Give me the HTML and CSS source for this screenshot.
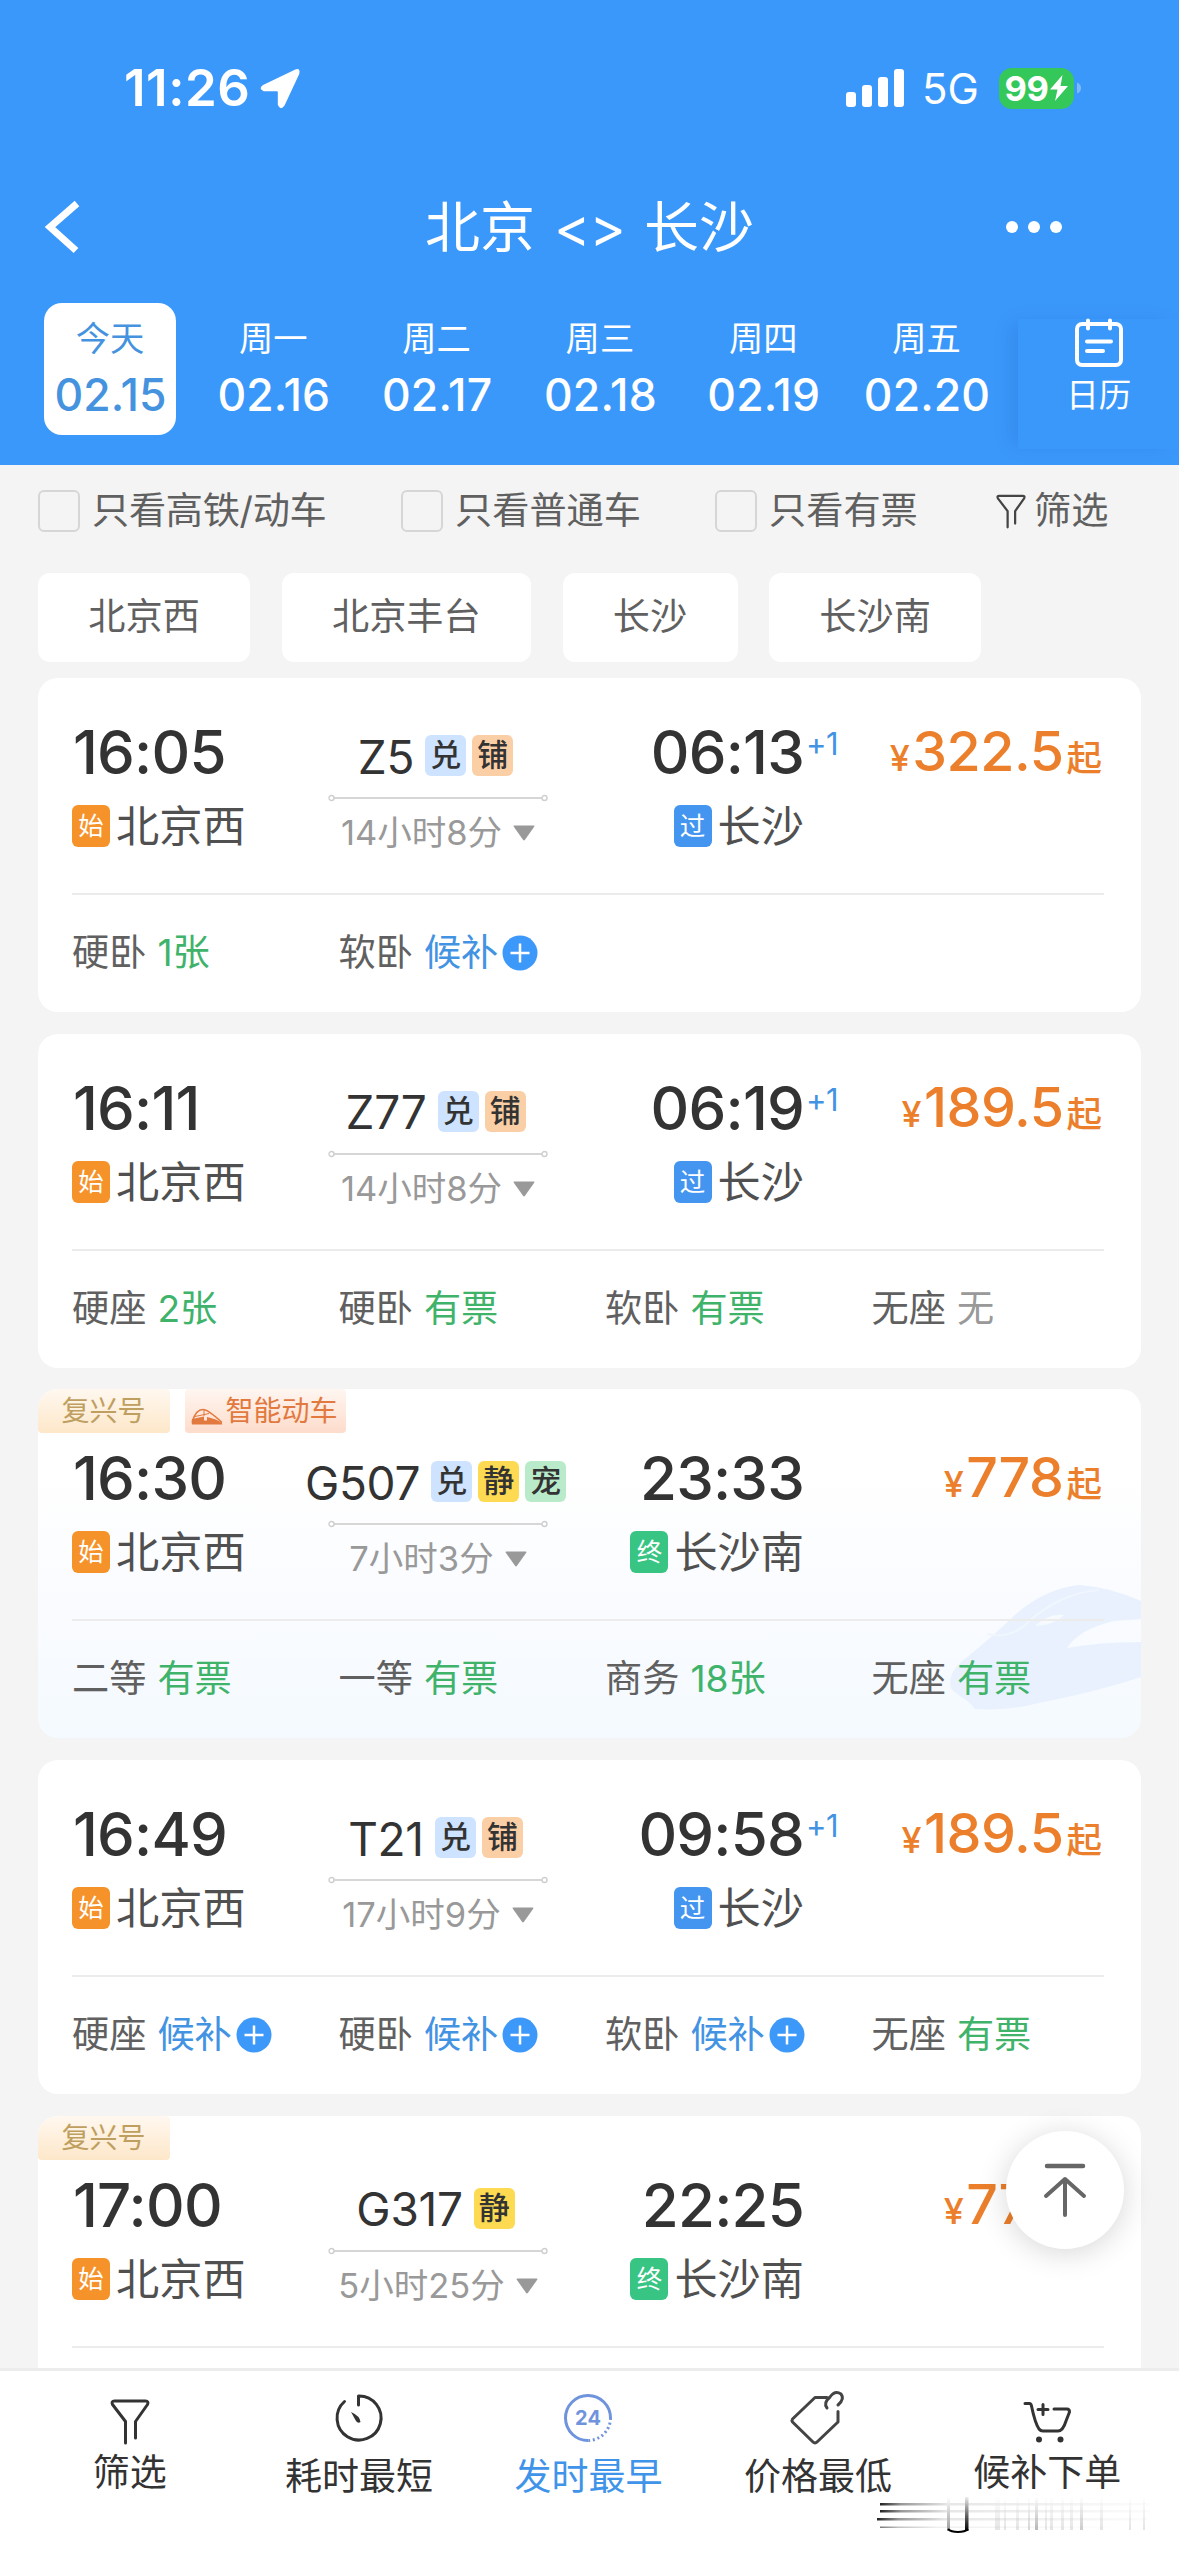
FILE: index.html
```html
<!DOCTYPE html>
<html lang="zh-CN">
<head>
<meta charset="utf-8">
<title>北京 - 长沙 车票查询</title>
<link rel="stylesheet" href="styles.css">
</head>
<body>
<svg class="defs" aria-hidden="true">
  <symbol id="i-funnel" viewBox="0 0 40 46"><path d="M15.500 44V22.500L2.500 5.500Q1 2 4.500 2H35.500Q39 2 37.500 5.500L25.500 22.500V39" fill="none" stroke="currentColor" stroke-width="3" stroke-linecap="round" stroke-linejoin="round"/></symbol>
  <symbol id="i-plus" viewBox="0 0 36 36"><circle cx="18" cy="18" r="17.500" fill="#3c98f9"/><path d="M18 8.500v19M8.500 18h19" stroke="#fff" stroke-width="2.500"/></symbol>
  <symbol id="i-line" viewBox="0 0 220 8"><path d="M6 4H214" stroke="#d6d6d6" stroke-width="2"/><circle cx="3.500" cy="4" r="2.500" fill="#fff" stroke="#cfcfcf" stroke-width="1.400"/><circle cx="216.500" cy="4" r="2.500" fill="#fff" stroke="#cfcfcf" stroke-width="1.400"/></symbol>
  <symbol id="i-down" viewBox="0 0 22 16"><path d="M1.500 .5h19q1.500 0 .7 1.200L12 14.800q-1 1.200-2 0L.8 1.700Q0 .5 1.500 .5Z" fill="#999"/></symbol>
</svg>

<header class="header">
  <div class="status">
    <span class="clock">11:26</span>
    <svg class="loc" viewBox="0 0 40 40"><path d="M35 1.500 2.500 17Q-2 20 3 22H16.500Q18 22 18 23.500V36.500Q20 42 23.500 37L38.500 5Q40-1 35 1.500Z" fill="#fff" stroke="#fff" stroke-width="1.500"/></svg>
    <svg class="signal" viewBox="0 0 60 38"><g fill="#fff"><rect x="0" y="23" width="10" height="15" rx="3"/><rect x="16" y="16" width="10" height="22" rx="3"/><rect x="32" y="8" width="10" height="30" rx="3"/><rect x="48" y="0" width="10" height="38" rx="3"/></g></svg>
    <span class="net">5G</span>
    <span class="battery">99<svg viewBox="0 0 18 26"><path d="M12.500 0 0 14.500h7.500L5 26 18 11h-7.500Z" fill="#fff"/></svg></span>
    <svg class="nub" viewBox="0 0 5 14"><path d="M0 0Q5 2 5 7T0 14Z" fill="#7dbcfb"/></svg>
  </div>
  <div class="nav">
    <svg class="back" viewBox="0 0 36 52"><path d="M33 2.500 6 26 32 49.500" fill="none" stroke="#fff" stroke-width="7"/></svg>
    <h1>北京 <span class="swap">&lt;&gt;</span> 长沙</h1>
    <svg class="more" viewBox="0 0 58 14"><g fill="#fff"><circle cx="6" cy="7" r="6"/><circle cx="28" cy="7" r="6"/><circle cx="50" cy="7" r="6"/></g></svg>
  </div>
  <div class="dates">
    <div class="day on"><span>今天</span><b>02.15</b></div>
    <div class="day"><span>周一</span><b>02.16</b></div>
    <div class="day"><span>周二</span><b>02.17</b></div>
    <div class="day"><span>周三</span><b>02.18</b></div>
    <div class="day"><span>周四</span><b>02.19</b></div>
    <div class="day"><span>周五</span><b>02.20</b></div>
    <div class="cal">
      <svg viewBox="0 0 50 50"><g fill="none" stroke="#fff" stroke-width="4" stroke-linecap="round"><rect x="3" y="6" width="44" height="41" rx="5"/><path d="M14 2.500v8M36 2.500v8M13 23.500h24M13 33h16"/></g></svg>
      <span>日历</span>
    </div>
  </div>
</header>

<section class="filters">
  <label class="check c1"><i></i>只看高铁/动车</label>
  <label class="check c2"><i></i>只看普通车</label>
  <label class="check c3"><i></i>只看有票</label>
  <span class="sift"><svg><use href="#i-funnel"/></svg>筛选</span>
</section>

<section class="chips"><span>北京西</span><span>北京丰台</span><span>长沙</span><span>长沙南</span></section>

<main class="list">
  <article class="card">
    <div class="trip">
      <div class="from"><div class="time">16:05</div><div class="stn"><i class="mk start">始</i>北京西</div></div>
      <div class="mid"><div class="no">Z5<i class="tg dui">兑</i><i class="tg pu">铺</i></div><svg class="line"><use href="#i-line"/></svg><div class="dur">14小时8分<svg><use href="#i-down"/></svg></div></div>
      <div class="to"><div class="time">06:13<sup>+1</sup></div><div class="stn"><i class="mk pass">过</i>长沙</div></div>
      <div class="price"><small>¥</small>322.5<em>起</em></div>
    </div>
    <div class="seats"><span>硬卧<b>1张</b></span><span>软卧<b class="wait">候补<svg><use href="#i-plus"/></svg></b></span></div>
  </article>

  <article class="card">
    <div class="trip">
      <div class="from"><div class="time">16:11</div><div class="stn"><i class="mk start">始</i>北京西</div></div>
      <div class="mid"><div class="no">Z77<i class="tg dui">兑</i><i class="tg pu">铺</i></div><svg class="line"><use href="#i-line"/></svg><div class="dur">14小时8分<svg><use href="#i-down"/></svg></div></div>
      <div class="to"><div class="time">06:19<sup>+1</sup></div><div class="stn"><i class="mk pass">过</i>长沙</div></div>
      <div class="price"><small>¥</small>189.5<em>起</em></div>
    </div>
    <div class="seats"><span>硬座<b>2张</b></span><span>硬卧<b>有票</b></span><span>软卧<b>有票</b></span><span>无座<b class="none">无</b></span></div>
  </article>

  <article class="card tagged smart">
    <svg class="train" viewBox="0 0 192 126">
      <path d="M192 16Q160 2 130 0Q95 4 66 30Q40 55 12 77Q-2 90 2 104L12 112Q20 116 26 124Q60 126 90 118Q150 106 192 92V57Q150 57 118 63Q130 44 165 36L192 34Z" fill="#e8f1fd"/>
      <path d="M38 49Q60 54 76 40Q110 8 150 5" fill="none" stroke="#f1f6fe" stroke-width="2"/>
      <path d="M86 41Q100 28 115 30Q106 40 86 41Z" fill="#f6fafe"/>
    </svg>
    <div class="labels"><span class="fx">复兴号</span><span class="zn"><svg viewBox="0 0 32 17"><path d="M1.500 13Q5 1.500 12 1.500Q17 1.500 31 14.500" fill="none" stroke="#e2793f" stroke-width="1.500"/><path d="M4 8.500 18 5.500M13 2v6" stroke="#e2793f" stroke-width="1"/><path d="M1 11 13 8.500V12.500H16V9Q26 11 31 15V16.500H1Q0 15 1 11Z" fill="#e2793f"/></svg>智能动车</span></div>
    <div class="trip">
      <div class="from"><div class="time">16:30</div><div class="stn"><i class="mk start">始</i>北京西</div></div>
      <div class="mid"><div class="no">G507<i class="tg dui">兑</i><i class="tg jing">静</i><i class="tg chong">宠</i></div><svg class="line"><use href="#i-line"/></svg><div class="dur">7小时3分<svg><use href="#i-down"/></svg></div></div>
      <div class="to"><div class="time">23:33</div><div class="stn"><i class="mk end">终</i>长沙南</div></div>
      <div class="price"><small>¥</small>778<em>起</em></div>
    </div>
    <div class="seats"><span>二等<b>有票</b></span><span>一等<b>有票</b></span><span>商务<b>18张</b></span><span>无座<b>有票</b></span></div>
  </article>

  <article class="card">
    <div class="trip">
      <div class="from"><div class="time">16:49</div><div class="stn"><i class="mk start">始</i>北京西</div></div>
      <div class="mid"><div class="no">T21<i class="tg dui">兑</i><i class="tg pu">铺</i></div><svg class="line"><use href="#i-line"/></svg><div class="dur">17小时9分<svg><use href="#i-down"/></svg></div></div>
      <div class="to"><div class="time">09:58<sup>+1</sup></div><div class="stn"><i class="mk pass">过</i>长沙</div></div>
      <div class="price"><small>¥</small>189.5<em>起</em></div>
    </div>
    <div class="seats"><span>硬座<b class="wait">候补<svg><use href="#i-plus"/></svg></b></span><span>硬卧<b class="wait">候补<svg><use href="#i-plus"/></svg></b></span><span>软卧<b class="wait">候补<svg><use href="#i-plus"/></svg></b></span><span>无座<b>有票</b></span></div>
  </article>

  <article class="card tagged">
    <div class="labels"><span class="fx">复兴号</span></div>
    <div class="trip">
      <div class="from"><div class="time">17:00</div><div class="stn"><i class="mk start">始</i>北京西</div></div>
      <div class="mid"><div class="no">G317<i class="tg jing">静</i></div><svg class="line"><use href="#i-line"/></svg><div class="dur">5小时25分<svg><use href="#i-down"/></svg></div></div>
      <div class="to"><div class="time">22:25</div><div class="stn"><i class="mk end">终</i>长沙南</div></div>
      <div class="price"><small>¥</small>778<em>起</em></div>
    </div>
  </article>
</main>

<div class="totop"><svg viewBox="0 0 44 56"><g fill="none" stroke="#666" stroke-width="4" stroke-linecap="round" stroke-linejoin="round"><path d="M4 4H40" stroke-width="4.500"/><path d="M22 17V53M3 34 22 17 41 34"/></g></svg></div>

<nav class="tabs">
  <div class="tab up"><svg class="t-fun"><use href="#i-funnel"/></svg>筛选</div>
  <div class="tab"><svg viewBox="0 0 50 54"><g fill="none" stroke="#333" stroke-width="3" stroke-linecap="round" stroke-linejoin="round"><path d="M24.500 14V5A22 22 0 1 1 10.500 10.500"/></g><path d="M17 21Q26 25 26.500 31Q24 33 22 30Z" fill="#333"/></svg>耗时最短</div>
  <div class="tab on"><svg viewBox="0 0 50 54"><g fill="none" stroke="#6f93dc" stroke-width="3"><path d="M25.500 49.500A22.500 22.500 0 1 1 47.500 27"/><path d="M47.500 27A22.500 22.500 0 0 1 25.500 49.500" stroke-dasharray="2 2.700"/></g><text x="25" y="33.500" text-anchor="middle">24</text></svg>发时最早</div>
  <div class="tab"><svg viewBox="0 0 50 54"><g fill="none" stroke="#444" stroke-width="3" stroke-linecap="round" stroke-linejoin="round"><path d="M34 6.500H22L-.5 28Q-1.500 29.500-.5 31L20 51Q22 53 24 51L45 31V20.500"/><path d="M34 17Q30 12 37 6Q42-1 48 3Q52 8 45 14"/></g></svg>价格最低</div>
  <div class="tab up"><svg viewBox="0 0 50 54"><g fill="none" stroke="#333" stroke-width="3" stroke-linecap="round" stroke-linejoin="round"><path d="M3 12.500H7.500Q9 12.500 9.500 15Q13 32 17 38Q18.500 40 21 40H36Q41 40 44 30L47.500 21Q47.500 18 45 18H32M16 18.500H26M21 13.500V23.500"/></g><circle cx="17" cy="48.500" r="3" fill="#333"/><circle cx="38.500" cy="48.500" r="3" fill="#333"/></svg>候补下单</div>
  <svg class="smear" viewBox="0 0 276 44">
    <defs>
      <linearGradient id="fade"><stop offset="0" stop-color="#222"/><stop offset=".08" stop-color="#999"/><stop offset=".25" stop-color="#e6e6e6"/><stop offset="1" stop-color="#fcfcfc"/></linearGradient>
      <linearGradient id="rise" x2="0" y2="1"><stop offset="0" stop-color="#fff"/><stop offset="1" stop-color="#999"/></linearGradient>
      <linearGradient id="dark" x2="0" y2="1"><stop offset="0" stop-color="#eee"/><stop offset=".6" stop-color="#555"/><stop offset="1" stop-color="#000"/></linearGradient>
    </defs>
    <g fill="url(#fade)"><rect x="3" y="8" width="270" height="2.500"/><rect x="3" y="15" width="270" height="2.500"/><rect x="0" y="23" width="270" height="2.500"/><rect x="3" y="31.500" width="230" height="1.500" opacity=".6"/></g>
    <g fill="url(#rise)"><rect x="70" y="2" width="3" height="34"/><g opacity=".25"><rect x="118" y="2" width="5" height="33"/><rect x="127" y="2" width="2" height="33"/><rect x="139" y="2" width="3" height="33"/><rect x="168" y="2" width="2" height="33"/><rect x="173" y="2" width="3" height="33"/><rect x="184" y="2" width="3" height="33"/><rect x="193" y="2" width="3" height="33"/><rect x="223" y="2" width="3" height="33"/><rect x="252" y="2" width="2" height="33"/><rect x="266" y="2" width="2" height="33"/></g><rect x="151" y="2" width="2" height="33" opacity=".4"/><rect x="158" y="2" width="3" height="33" opacity=".7"/><rect x="203" y="2" width="3" height="33" opacity=".5"/></g>
    <rect x="88" y="2" width="3.500" height="34" fill="url(#dark)"/>
    <path d="M71 34Q74 37 81 37T91 34" fill="none" stroke="#000" stroke-width="2"/>
  </svg>
</nav>
</body>
</html>
```

FILE: styles.css
```css
* { box-sizing: border-box; }

body {
  margin: 0;
  width: 1179px;
  height: 2556px;
  position: relative;
  overflow: hidden;
  display: flex;
  flex-direction: column;
  background: #f4f4f4;
  color: #606060;
  font-family: Inter, "Noto Sans CJK SC", sans-serif;
  font-size: 37.2px;
}

svg { display: block; overflow: visible; flex: none; }
i, em { font-style: normal; }
.defs { position: absolute; width: 0; height: 0; }

/* header */
.header { flex: none; height: 465px; background: #3b98fb; color: #fff; }

.status { height: 176px; display: flex; align-items: center; padding: 0 97px 0 124px; }
.clock { font-size: 51px; font-weight: 600; line-height: 60px; width: 137px; letter-spacing: .5px; }
.loc { width: 39px; height: 39px; margin-right: 546px; }
.signal { width: 60px; height: 38px; margin-right: 16px; }
.net { font-size: 42px; line-height: 50px; width: 77px; padding-top: 2px; }
.battery {
  width: 75px; height: 41px; border-radius: 13px; background: #34c759;
  display: flex; align-items: center; justify-content: center; gap: 2px;
  font-size: 34.500px; font-weight: 700; letter-spacing: -.5px;
}
.battery svg { width: 18px; height: 26px; }
.nub { width: 4px; height: 14px; margin-left: 3px; }

.nav { height: 102px; display: flex; align-items: center; padding: 0 115px 0 44px; }
.back { width: 36px; height: 52px; }
.nav h1 {
  margin: 0; flex: 1; padding-left: 93px; text-align: center;
  font-size: 55px; font-weight: 400; line-height: 70px; white-space: nowrap;
}
.swap { display: inline-block; width: 78px; letter-spacing: -1px; }
.more { width: 58px; height: 14px; }

.dates { display: flex; padding: 25px 0 0 44px; height: 187px; overflow: hidden; }
.day {
  width: 132px; height: 132px; margin-right: 31.300px; border-radius: 18px; padding-top: 13px;
  display: flex; flex-direction: column; align-items: center; flex: none;
}
.day span { font-size: 34.300px; line-height: 46px; }
.day b { font-size: 44.500px; line-height: 54px; font-weight: 450; margin-top: 6px; letter-spacing: .1px; padding-left: 1px; white-space: nowrap; }
.day.on { background: #fff; color: #4593de; }
.cal {
  width: 162px; height: 130px; margin: 16px 0 0 -6px;
  display: flex; flex-direction: column; align-items: center; flex: none;
  background: #3b98fb; box-shadow: -10px 0 18px -4px rgba(0, 50, 130, .13);
}
.cal svg { width: 50px; height: 50px; margin-top: -1px; }
.cal span { font-size: 32.500px; line-height: 40px; margin-top: 8px; }

/* filters */
.filters { flex: none; height: 92px; display: flex; align-items: center; padding-left: 38px; line-height: 50px; }
.check { display: flex; align-items: center; white-space: nowrap; }
.check i { width: 42px; height: 42px; border: 2px solid #d6d6d6; border-radius: 6px; margin-right: 12px; }
.c1 { width: 363px; letter-spacing: -.3px; }
.c2 { width: 314px; }
.c3 { width: 281px; }
.sift { display: flex; align-items: center; }
.sift svg { width: 30px; height: 35px; margin-right: 8px; color: #444; }

.chips { flex: none; display: flex; gap: 31.500px; margin: 16px 0 16px 38px; }
.chips span { height: 89px; line-height: 88px; padding: 0 50.300px; border-radius: 12px; background: #fff; }

/* train cards */
.list { flex: 1; display: flex; flex-direction: column; gap: 21.700px; padding: 0 38px; }
.card { position: relative; overflow: hidden; flex: none; height: 334px; border-radius: 20px; background: #fff; padding: 0 37px 0 34px; }
.tagged { height: 349px; }
.smart { background: linear-gradient(#fff 25%, #f9fbff 65%, #f4faff); }
.train { position: absolute; right: 0; top: 196px; width: 192px; height: 126px; }

.labels { display: flex; gap: 15px; margin: 0 -34px; height: 44px; font-size: 28px; line-height: 42px; }
.labels span { display: flex; align-items: center; justify-content: center; border-radius: 4px; }
.fx { width: 132px; padding-right: 1px; background: linear-gradient(#fff8f0, #fde7c9); color: #bf9f60; }
.zn { width: 161px; gap: 2px; padding-right: 2px; background: linear-gradient(#fff6f1, #fddccb); color: #e2793f; }
.zn svg { width: 32px; height: 17px; margin-top: 11px; }

.trip {
  position: relative; height: 217px; border-bottom: 2px solid #ececec;
  display: grid; grid-template-columns: 215px 302px 215px 1fr; padding-top: 39px;
}
.tagged .trip { height: 188px; padding-top: 10px; }
.time { position: relative; font-size: 60px; line-height: 70px; font-weight: 450; color: #333; letter-spacing: -.8px; padding-left: 1px; }
.time sup { position: absolute; left: 100%; top: 0; font-size: 31px; line-height: 54px; font-weight: 400; color: #4393e3; margin-left: 2px; letter-spacing: -.5px; }
.stn { display: flex; align-items: center; font-size: 43.200px; line-height: 60px; color: #505050; margin-top: 9px; white-space: nowrap; }
.mk { width: 38px; height: 42px; border-radius: 6px; color: #fff; font-size: 25.500px; line-height: 42px; text-align: center; margin-right: 6px; }
.start { background: #f6922a; }
.pass { background: #4395f0; }
.end { background: #38c584; }
.to { justify-self: end; display: flex; flex-direction: column; align-items: flex-end; }

.mid { display: flex; flex-direction: column; align-items: center; }
.no { display: flex; align-items: center; height: 76px; font-size: 46px; color: #333; letter-spacing: -.3px; padding: 3px 5px 0 0; }
.tg { width: 41px; height: 41px; border-radius: 6px; margin-left: 6px; font-size: 31px; line-height: 40px; text-align: center; color: #333; font-weight: 500; margin-top: -2px; }
.no .tg:first-of-type { margin-left: 11px; }
.dui { background: #cde3ff; }
.pu { background: #fbcfa6; }
.jing { background: #fdda52; }
.chong { background: #b9ebcb; }
.line { width: 220px; height: 8px; margin-top: 1px; }
.dur { display: flex; align-items: center; font-size: 34.500px; line-height: 50px; color: #999; margin-top: 6px; white-space: nowrap; }
.dur svg { width: 22px; height: 16px; margin-left: 11px; }

.price { justify-self: end; display: flex; align-items: baseline; font-size: 55.500px; line-height: 70px; font-weight: 500; color: #eb7f2b; padding-right: 2px; letter-spacing: -.5px; white-space: nowrap; height: 70px; margin-top: -1px; }
.price small { font-size: 36px; margin-right: 3px; }
.price em { font-size: 35.500px; margin-left: 3px; letter-spacing: 0; }

.seats { display: grid; grid-template-columns: repeat(4, 266.500px); line-height: 50px; padding-top: 33px; position: relative; }
.seats span { display: flex; white-space: nowrap; }
.seats b { font-weight: 400; color: #40b36b; margin-left: 11px; display: flex; align-items: center; }
.seats .wait { color: #4393e3; }
.seats .none { color: #999; }
.seats svg { width: 36px; height: 36px; margin-left: 4px; }

/* floating button */
.totop {
  position: absolute; left: 1006px; top: 2131px; width: 118px; height: 118px; border-radius: 50%;
  background: #fff; box-shadow: 0 4px 30px rgba(0, 0, 0, .16);
  display: flex; align-items: center; justify-content: center;
}
.totop svg { width: 44px; height: 56px; }

/* bottom sort bar */
.tabs {
  position: absolute; left: 0; right: 0; bottom: 0; height: 188px; padding: 20px 17px 0 15px;
  border-top: 3px solid #ececec; background: #fff; color: #333;
  display: grid; grid-template-columns: repeat(5, 1fr);
}
.tab { display: flex; flex-direction: column; align-items: center; font-size: 37px; line-height: 50px; gap: 7px; }
.tab svg { width: 50px; height: 54px; }
.tab.up { gap: 3px; }
.tab .t-fun { width: 40px; height: 46px; margin: 8px 0 0; }
.tab.on { color: #3f94ea; }
.tab text { font-size: 20px; font-weight: 700; fill: #6f93dc; }
.smear { position: absolute; left: 877px; bottom: 17px; width: 276px; height: 44px; }
```
